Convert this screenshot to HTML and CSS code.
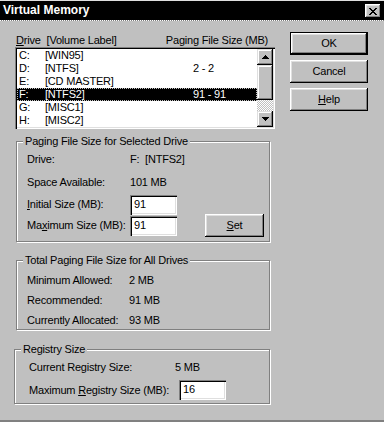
FILE: index.html
```html
<!DOCTYPE html>
<html lang="en">
<head>
  <meta charset="UTF-8" />
  <title>Virtual Memory</title>
  <link rel="stylesheet" href="styles.css">
</head>
<body>

<div class="dialog">
  <div class="titlebar">
    <span class="title">Virtual Memory</span>
    <button class="close-btn" type="button">
      <svg width="8" height="7" viewBox="0 0 8 7"><path d="M0 0h2v1H0zM6 0h2v1H6zM1 1h2v1H1zM5 1h2v1H5zM2 2h4v1H2zM3 3h2v1H3zM2 4h4v1H2zM1 5h2v1H1zM5 5h2v1H5zM0 6h2v1H0zM6 6h2v1H6z"/></svg>
    </button>
  </div>
  <div class="title-rule"></div>

  <div class="dialog-body">
    <div class="main-col">
      <div class="list-head">
        <span><u>D</u>rive <span class="vol-head">[Volume Label]</span></span>
        <span>Paging File Size (MB)</span>
      </div>

      <div class="listbox">
        <ul class="drive-list">
          <li><span class="letter">C:</span><span class="vol">[WIN95]</span><span class="size"></span></li>
          <li><span class="letter">D:</span><span class="vol">[NTFS]</span><span class="size">2 - 2</span></li>
          <li><span class="letter">E:</span><span class="vol">[CD MASTER]</span><span class="size"></span></li>
          <li class="selected"><span class="letter">F:</span><span class="vol">[NTFS2]</span><span class="size">91 - 91</span></li>
          <li><span class="letter">G:</span><span class="vol">[MISC1]</span><span class="size"></span></li>
          <li><span class="letter">H:</span><span class="vol">[MISC2]</span><span class="size"></span></li>
        </ul>
        <div class="scrollbar">
          <div class="sb-btn">
            <svg width="7" height="4" viewBox="0 0 7 4"><path d="M3 0h1v1h1v1h1v1h1v1H0V3h1V2h1V1h1z"/></svg>
          </div>
          <div class="sb-thumb"></div>
          <div class="sb-track"></div>
          <div class="sb-btn">
            <svg width="7" height="4" viewBox="0 0 7 4"><path d="M0 0h7v1H6v1H5v1H4v1H3V3H2V2H1V1H0z"/></svg>
          </div>
        </div>
      </div>

      <div class="group group-drive">
        <span class="group-title">Paging File Size for Selected Drive</span>
        <span class="row-label">Drive:</span>
        <span class="row-value">F:&nbsp; [NTFS2]</span>
        <span class="row-label">Space Available:</span>
        <span class="row-value">101 MB</span>
        <span class="row-label"><u>I</u>nitial Size (MB):</span>
        <span class="field">91</span>
        <span class="row-label">Ma<u>x</u>imum Size (MB):</span>
        <span class="field">91</span>
        <button class="btn set-btn" type="button"><u>S</u>et</button>
      </div>

      <div class="group group-total">
        <span class="group-title">Total Paging File Size for All Drives</span>
        <span class="row-label">Minimum Allowed:</span>
        <span class="row-value">2 MB</span>
        <span class="row-label">Recommended:</span>
        <span class="row-value">91 MB</span>
        <span class="row-label">Currently Allocated:</span>
        <span class="row-value">93 MB</span>
      </div>

      <div class="group group-registry">
        <span class="group-title">Registry Size</span>
        <span class="row-label">Current Registry Size:</span>
        <span class="row-value">5 MB</span>
        <span class="row-label">Maximum <u>R</u>egistry Size (MB):</span>
        <span class="field reg-field">16</span>
      </div>
    </div>

    <div class="button-col">
      <button class="btn btn-default" type="button">OK</button>
      <button class="btn" type="button">Cancel</button>
      <button class="btn" type="button"><u>H</u>elp</button>
    </div>
  </div>
</div>

</body>
</html>
```

FILE: styles.css
```css
* { margin: 0; padding: 0; box-sizing: border-box; }

body {
  width: 384px;
  height: 422px;
  overflow: hidden;
  background: #c0c0c0;
  color: #000;
  font-family: "Liberation Sans", Arial, sans-serif;
  font-size: 11px;
  line-height: 13px;
  letter-spacing: -0.2px;
}

.dialog {
  height: 422px;
  display: flex;
  flex-direction: column;
  border-top: 1px solid #dfdfdf;
  border-bottom: 2px solid #808080;
}

/* title bar */
.titlebar {
  height: 19px;
  background: #000;
  color: #fff;
  display: flex;
  align-items: center;
  justify-content: space-between;
  padding: 0 3px;
}

.title {
  font-weight: bold;
  font-size: 12px;
  letter-spacing: 0;
}

.close-btn {
  width: 16px;
  height: 14px;
  margin-top: 1px;
  border: none;
  background: #c0c0c0;
  display: flex;
  align-items: center;
  justify-content: center;
  box-shadow: inset -1px -1px #000, inset 1px 1px #fff, inset -2px -2px #808080, inset 2px 2px #dfdfdf;
}

.title-rule {
  height: 1px;
  background: repeating-linear-gradient(90deg, #fff 0 1px, #808080 1px 2px);
}

.dialog-body {
  flex: 1;
  display: grid;
  grid-template-columns: 260px 78px;
  column-gap: 15px;
  align-items: start;
  padding: 11px 0 0 15px;
}

.main-col { padding-top: 2px; }

/* drive list */
.list-head {
  display: flex;
  justify-content: space-between;
  padding: 0 7px 0 1px;
}

.vol-head { margin-left: 3px; }

.listbox {
  height: 82px;
  display: flex;
  padding: 2px;
  background: #fff;
  box-shadow: inset 1px 1px #808080, inset 2px 2px #000, inset -1px -1px #fff, inset -2px -2px #dfdfdf;
}

.drive-list {
  flex: 1;
  list-style: none;
}

.drive-list li {
  display: flex;
  height: 13px;
  padding-left: 2px;
}

.drive-list .letter { width: 26px; }
.drive-list .vol { width: 148px; }

.drive-list li.selected {
  background: #000;
  color: #fff;
  outline: 1px dotted #c0c0c0;
  outline-offset: -1px;
}

.scrollbar {
  width: 16px;
  display: flex;
  flex-direction: column;
}

.sb-btn,
.sb-thumb {
  background: #c0c0c0;
  box-shadow: inset -1px -1px #000, inset 1px 1px #dfdfdf, inset -2px -2px #808080, inset 2px 2px #fff;
}

.sb-btn {
  height: 16px;
  display: flex;
  align-items: center;
  justify-content: center;
}

.sb-thumb { height: 35px; }

.sb-track {
  flex: 1;
  background: repeating-conic-gradient(#fff 0 25%, #c0c0c0 0 50%) 0 0 / 2px 2px;
}

/* group boxes */
.group {
  position: relative;
  display: grid;
  border: 1px solid #808080;
  box-shadow: inset 1px 1px #fff, 1px 1px #fff;
}

.group-title {
  position: absolute;
  top: -7px;
  left: 6px;
  padding: 0 2px;
  background: #c0c0c0;
}

.row-label,
.row-value {
  align-self: center;
}

.group-drive {
  width: 254px;
  height: 101px;
  margin: 12px 0 0 1px;
  padding: 6px 5px 0 10px;
  grid-template-columns: 103px 47px 1fr;
  grid-template-rows: 23px 23px 21px 21px;
}

.group-drive .row-value { grid-column: 2 / 4; }

.field {
  width: 47px;
  height: 20px;
  align-self: center;
  padding: 3px 0 0 4px;
  background: #fff;
  box-shadow: inset 1px 1px #808080, inset 2px 2px #000, inset -1px -1px #fff, inset -2px -2px #dfdfdf;
}

.set-btn {
  grid-column: 3;
  grid-row: 3 / 5;
  align-self: end;
  justify-self: end;
  width: 59px;
  margin-bottom: -1px;
}

.group-total {
  width: 254px;
  height: 70px;
  margin: 18px 0 0 1px;
  padding: 9px 5px 0 10px;
  grid-template-columns: 102px 1fr;
  grid-auto-rows: 20px;
}

.group-registry {
  width: 256px;
  height: 55px;
  margin: 19px 0 0 -1px;
  padding: 8px 5px 0 14px;
  grid-template-columns: 146px 1fr;
  grid-template-rows: 18px 20px;
  row-gap: 4px;
}

.reg-field { margin-left: 4px; }

/* push buttons */
.button-col {
  display: flex;
  flex-direction: column;
  gap: 5px;
}

.btn {
  height: 23px;
  border: none;
  background: #c0c0c0;
  color: #000;
  font: inherit;
  letter-spacing: inherit;
  box-shadow: inset -1px -1px #000, inset 1px 1px #fff, inset -2px -2px #808080, inset 2px 2px #dfdfdf;
}

.btn-default {
  border: 1px solid #000;
}
```
